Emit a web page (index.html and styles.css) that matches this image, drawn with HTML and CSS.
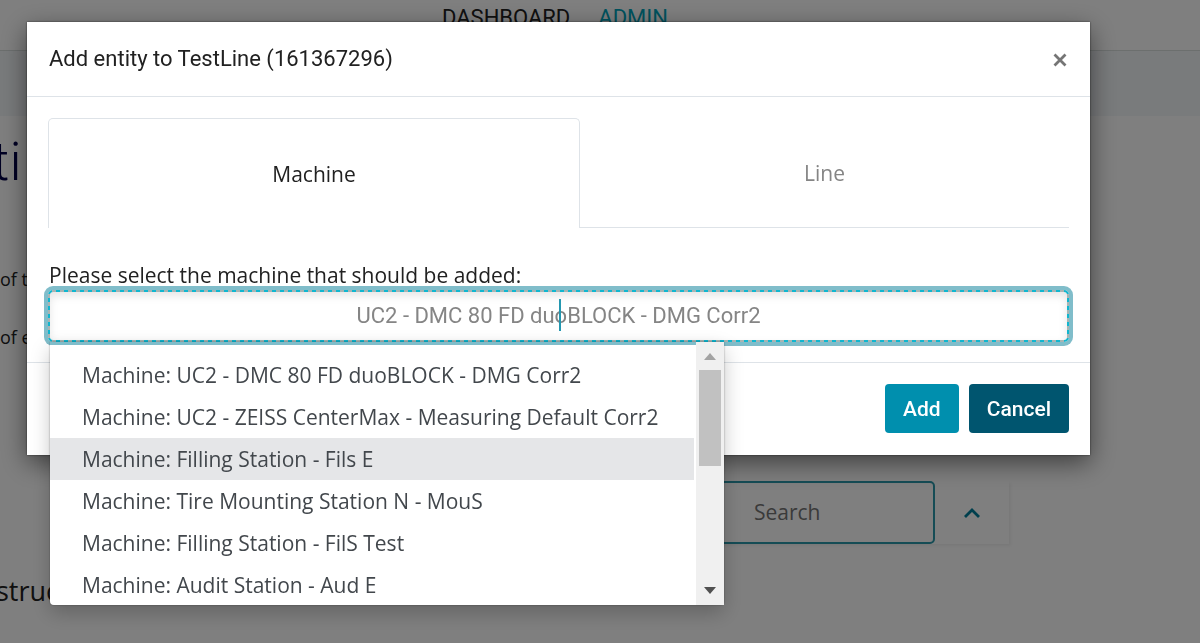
FILE: index.html
```
<!DOCTYPE html>
<html lang="en">
<head>
<meta charset="utf-8">
<title>Admin</title>
<link rel="stylesheet" href="styles.css">
</head>
<body>
<div class="page">
  <nav class="topbar">
    <a class="topbar-link" href="#">DASHBOARD</a>
    <a class="topbar-link active" href="#">ADMIN</a>
  </nav>
  <div class="strip"></div>
  <main class="content">
    <h1 class="title">ti</h1>
    <p class="note">of t</p>
    <p class="note">of e</p>
    <div class="searchbar">
      <input class="search" type="search" placeholder="Search" aria-label="Search">
      <button class="collapse" type="button" aria-label="Collapse">
        <svg width="18" height="12" viewBox="0 0 18 12"><path d="M2 10 L9 3 L16 10" fill="none" stroke="#007f9b" stroke-width="2.800"/></svg>
      </button>
    </div>
    <h2 class="subtitle">struc</h2>
  </main>
</div>

<div class="backdrop">
  <div class="modal" role="dialog" aria-labelledby="modal-title">
    <header class="modal-header">
      <h2 class="modal-title" id="modal-title">Add entity to TestLine (161367296)</h2>
      <button class="close" type="button" aria-label="Close">
        <svg width="14" height="14" viewBox="0 0 14 14"><path d="M1.500 1.500 L12.500 12.500 M12.500 1.500 L1.500 12.500" stroke="#757575" stroke-width="2.800"/></svg>
      </button>
    </header>
    <div class="modal-body">
      <div class="tabs" role="tablist">
        <button class="tab selected" type="button" role="tab" aria-selected="true">Machine</button>
        <button class="tab" type="button" role="tab" aria-selected="false">Line</button>
      </div>
      <label class="label" for="machine">Please select the machine that should be added:</label>
      <div class="field">
        <input class="picker" id="machine" type="text" placeholder="UC2 - DMC 80 FD duoBLOCK - DMG Corr2" autocomplete="off">
        <span class="caret"></span>
        <div class="menu">
          <ul class="options" role="listbox">
            <li class="option" role="option">Machine: UC2 - DMC 80 FD duoBLOCK - DMG Corr2</li>
            <li class="option" role="option">Machine: UC2 - ZEISS CenterMax - Measuring Default Corr2</li>
            <li class="option hovered" role="option">Machine: Filling Station - Fils E</li>
            <li class="option" role="option">Machine: Tire Mounting Station N - MouS</li>
            <li class="option" role="option">Machine: Filling Station - FilS Test</li>
            <li class="option" role="option">Machine: Audit Station - Aud E</li>
          </ul>
          <div class="scrollbar">
            <svg class="arrow" width="12" height="7" viewBox="0 0 12 7"><path d="M0 7 L6 0 L12 7 Z" fill="#a3a3a3"/></svg>
            <div class="thumb"></div>
            <svg class="arrow" width="12" height="7" viewBox="0 0 12 7"><path d="M0 0 L6 7 L12 0 Z" fill="#505050"/></svg>
          </div>
        </div>
      </div>
    </div>
    <footer class="modal-footer">
      <button class="btn primary" type="button">Add</button>
      <button class="btn secondary" type="button">Cancel</button>
    </footer>
  </div>
</div>
</body>
</html>
```
FILE: styles.css
```
* {
  box-sizing: border-box;
}

body {
  margin: 0;
  height: 100vh;
  overflow: hidden;
  background: #fff;
  color: #212121;
  font-family: "Open Sans", "Noto Sans", sans-serif;
  font-size: 21px;
}

button,
input {
  font-family: inherit;
  font-size: inherit;
}

button {
  padding: 0;
  border: 0;
  background: none;
}

h1,
h2,
p,
ul {
  margin: 0;
  padding: 0;
}

.page {
  height: 100vh;
  overflow: hidden;
}

.topbar {
  display: flex;
  justify-content: center;
  gap: 28px;
  height: 51px;
  padding: 5px 90px 0 0;
  border-bottom: 1px solid #d8dedd;
  font-family: Roboto, sans-serif;
  font-size: 22px;
  line-height: 26px;
}

.topbar-link {
  color: #212121;
  text-decoration: none;
}

.topbar-link.active {
  color: #00a5bc;
}

.strip {
  height: 65px;
  background: #f3f6f9;
}

.content {
  display: flex;
  flex-direction: column;
  padding-top: 16px;
}

.title {
  color: #000046;
  font-family: Roboto, sans-serif;
  font-size: 54px;
  font-weight: 300;
  line-height: 60px;
  text-indent: -8px;
}

.note {
  margin-top: 30px;
  font-size: 18px;
  line-height: 28px;
}

.title + .note {
  margin-top: 73px;
}

.searchbar {
  display: flex;
  align-self: flex-end;
  width: 460px;
  margin: 130px 191px 0 0;
  box-shadow: 2px 2px 3px rgba(0, 0, 0, 0.06);
}

.search {
  flex: 1;
  min-width: 0;
  height: 63px;
  padding: 0 20px 2px 203px;
  border: 2px solid #2b98aa;
  border-radius: 5px;
  outline: none;
  background: #fff;
  font-size: 21px;
}

.search::placeholder {
  color: #757575;
}

.collapse {
  display: grid;
  place-items: center;
  width: 74px;
}

.subtitle {
  margin-top: 29px;
  font-size: 27px;
  font-weight: 400;
  line-height: 36px;
  text-indent: -4px;
}

.backdrop {
  position: fixed;
  inset: 0;
  padding: 22px 110px 0 27px;
  background: rgba(0, 0, 0, 0.5);
}

.modal {
  background: #fff;
  box-shadow: 0 8px 24px rgba(0, 0, 0, 0.5), 0 0 2px rgba(0, 0, 0, 0.6);
}

.modal-header {
  display: flex;
  align-items: center;
  justify-content: space-between;
  height: 75px;
  padding: 0 23px 0 22px;
  border-bottom: 1px solid #dee3e8;
}

.modal-title {
  font-family: Roboto, sans-serif;
  font-size: 22px;
  font-weight: 400;
  line-height: 28px;
}

.close {
  display: grid;
  place-items: center;
  padding-top: 2px;
}

.modal-body {
  padding: 21px 21px 20px;
}

.tabs {
  display: flex;
  height: 110px;
}

.tab {
  flex: 1;
  border-bottom: 1px solid #dee3e8;
  color: #858585;
}

.tab.selected {
  flex: 0 0 532px;
  border: 1px solid #dee3e8;
  border-bottom: 0;
  border-radius: 5px 5px 0 0;
  color: #212121;
}

.label {
  display: block;
  margin: 32px 0 0 1px;
  line-height: 30px;
}

.field {
  position: relative;
}

.picker {
  display: block;
  width: 100%;
  height: 52px;
  padding: 0 0 2px;
  border: 2px solid transparent;
  border-radius: 5px;
  outline: none;
  background:
    linear-gradient(#fff, #fff) padding-box,
    repeating-linear-gradient(90deg, #10b6cf 0 4px, #a9b4b3 4px 8px) top / 100% 2px no-repeat border-box,
    repeating-linear-gradient(90deg, #10b6cf 0 4px, #a9b4b3 4px 8px) bottom / 100% 2px no-repeat border-box,
    repeating-linear-gradient(#10b6cf 0 4px, #a9b4b3 4px 8px) border-box;
  box-shadow: inset 0 4px 8px rgba(0, 0, 0, 0.1), 0 0 0 4px #80bdca;
  font-family: Roboto, sans-serif;
  font-size: 22px;
  text-align: center;
}

.picker::placeholder {
  color: #858585;
}

.caret {
  position: absolute;
  top: 9px;
  left: 50%;
  width: 2px;
  height: 32px;
  background: #2497b0;
}

.menu {
  position: absolute;
  top: 52px;
  left: 2px;
  display: flex;
  width: 674px;
  height: 263px;
  border-radius: 0 0 4px 4px;
  box-shadow: 0 8px 20px rgba(0, 0, 0, 0.22), 0 0 2px rgba(0, 0, 0, 0.4);
}

.options {
  flex: 1;
  margin-top: 3px;
  padding-top: 9px;
  overflow: hidden;
  border-radius: 0 0 0 4px;
  background: #fff;
  list-style: none;
}

.option {
  height: 42px;
  margin-right: 2px;
  padding-left: 32px;
  color: #42474c;
  line-height: 42px;
  white-space: nowrap;
}

.option.hovered {
  background: #e5e6e8;
}

.scrollbar {
  display: flex;
  flex-direction: column;
  align-items: center;
  width: 28px;
  padding: 11px 0;
  background: #f0f0f0;
}

.thumb {
  width: 22px;
  height: 96px;
  margin: 10px 0 auto;
  background: #c1c1c1;
}

.modal-footer {
  display: flex;
  justify-content: flex-end;
  gap: 10px;
  padding: 21px 21px 22px;
  border-top: 1px solid #dee3e8;
}

.btn {
  height: 49px;
  padding: 0 18px;
  border-radius: 4px;
  color: #fff;
  font-family: Roboto, sans-serif;
  font-size: 21px;
  font-weight: 500;
}

.btn.primary {
  background: #008fae;
}

.btn.secondary {
  background: #00556f;
}
```
